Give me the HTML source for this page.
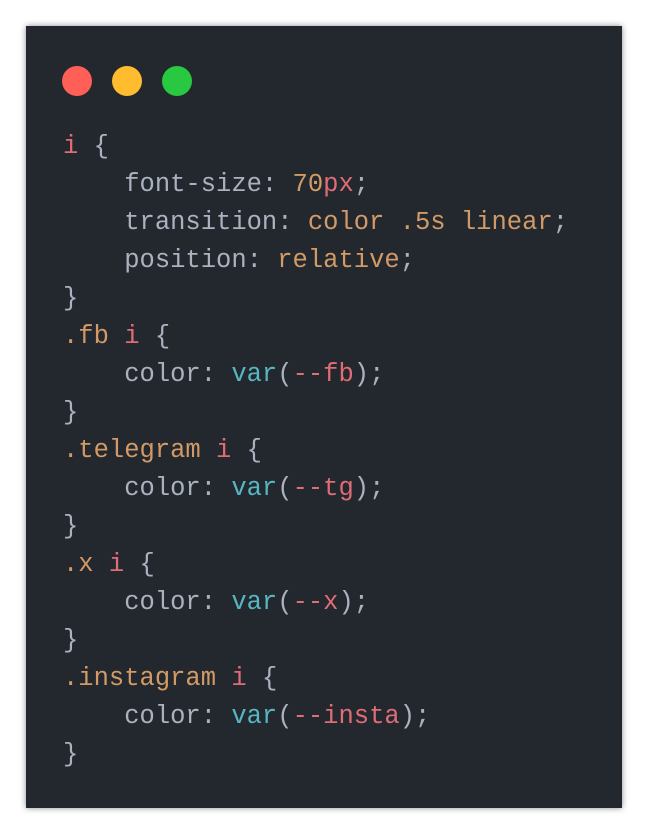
<!DOCTYPE html>
<html><head><style>
body{margin:0;width:648px;height:834px;background:#fff;overflow:hidden}
.card{position:absolute;left:26px;top:26px;width:596px;height:782px;background:#23272e;box-shadow:0 0 6px rgba(0,0,0,.45)}
.dot{position:absolute;top:40px;width:30px;height:30px;border-radius:50%}
pre{position:absolute;left:37px;top:102px;margin:0;font-family:"Liberation Mono",monospace;font-size:25.5px;line-height:38px;color:#abb2bf}
.r{color:#e06c75}.o{color:#d19a66}.c{color:#56b6c2}
</style></head><body>
<div class="card">
<div class="dot" style="left:36px;background:#ff5f57"></div>
<div class="dot" style="left:86px;background:#febc2e"></div>
<div class="dot" style="left:136px;background:#28c840"></div>
<pre><span class="r">i</span> {
    font-size: <span class="o">70</span><span class="r">px</span>;
    transition: <span class="o">color .5s linear</span>;
    position: <span class="o">relative</span>;
}
<span class="o">.fb</span> <span class="r">i</span> {
    color: <span class="c">var</span>(<span class="r">--fb</span>);
}
<span class="o">.telegram</span> <span class="r">i</span> {
    color: <span class="c">var</span>(<span class="r">--tg</span>);
}
<span class="o">.x</span> <span class="r">i</span> {
    color: <span class="c">var</span>(<span class="r">--x</span>);
}
<span class="o">.instagram</span> <span class="r">i</span> {
    color: <span class="c">var</span>(<span class="r">--insta</span>);
}</pre>
</div>
</body></html>
